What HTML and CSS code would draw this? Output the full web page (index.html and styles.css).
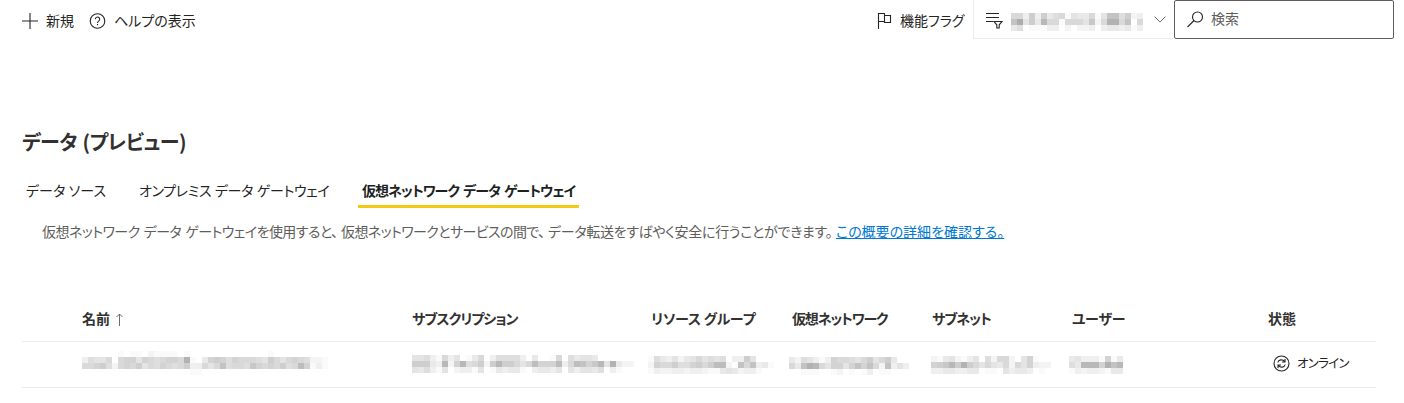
FILE: index.html
```html
<!DOCTYPE html>
<html lang="ja">
<head>
<meta charset="utf-8">
<title>データ (プレビュー)</title>
<link rel="stylesheet" href="styles.css">
</head>
<body>
<header class="commands">
  <button class="command new"><svg class="icon" width="16" height="16" viewBox="0 0 16 16"><path d="M8 0v16M0 8h16"/></svg><span class="t">新規</span></button>
  <button class="command help"><svg class="icon" width="17" height="16" viewBox="0 0 17 16"><circle cx="8.500" cy="8" r="7.300"/><path d="M6.300 6.200a2.200 2.200 0 1 1 3.600 1.700C8.900 8.600 8.500 9 8.500 10M8.500 11v1.300"/></svg><span class="t help-t">ヘルプの表示</span></button>
  <button class="command flags"><svg class="icon" width="15" height="17" viewBox="0 0 15 17"><path d="M1.500 17V1.500h6v8h-6M7.500 3.500h6v7h-6v-2"/></svg><span class="t">機能フラグ</span></button>
  <div class="filter"><svg class="icon" width="18" height="17" viewBox="0 0 18 17"><path d="M0 1.500h13M0 5.500h13M0 9.500h7M8 9.500h8l-2.800 3.300v3.200h-2.400v-3.200z"/></svg><span class="mosaic filter-m" data-rows="7739394671544715bb6923 bf594d7717775a27ee7b07 4601113302022303443413"></span><svg class="icon chevron" width="12" height="7" viewBox="0 0 12 7"><path d="M.5 .5 6 6 11.500 .5"/></svg></div>
  <label class="search"><svg class="icon" width="17" height="17" viewBox="0 0 17 17"><circle cx="10.500" cy="6" r="5"/><path d="M7 9.500.500 16"/></svg><span class="t">検索</span></label>
</header>
<main>
  <h1 class="t title">データ (プレビュー)</h1>
  <nav class="tabs">
    <a class="tab tab1"><span class="t">データ ソース</span></a>
    <a class="tab tab2"><span class="t">オンプレミス データ ゲートウェイ</span></a>
    <a class="tab tab3 active"><span class="t">仮想ネットワーク データ ゲートウェイ</span></a>
  </nav>
  <p class="intro"><span class="t s1">仮想ネットワーク データ ゲートウェイを使用すると、</span><span class="t s2">仮想ネットワークとサービスの間で、</span><span class="t s3">データ転送をすばやく安全に行うことができます。</span><a class="t link">この概要の詳細を確認する。</a></p>
  <div class="table">
    <div class="row head">
      <div class="cell"><span class="t">名前</span><svg class="icon sort" width="7" height="13" viewBox="0 0 7 13"><path d="M3.500 13V1M.500 4l3-3 3 3"/></svg></div>
      <div class="cell"><span class="t h2">サブスクリプション</span></div>
      <div class="cell"><span class="t h3">リソース グループ</span></div>
      <div class="cell"><span class="t h4">仮想ネットワーク</span></div>
      <div class="cell"><span class="t h5">サブネット</span></div>
      <div class="cell"><span class="t h6">ユーザー</span></div>
      <div class="cell"><span class="t">状態</span></div>
    </div>
    <div class="row body">
      <div class="cell"><span class="mosaic m1" data-rows="00000010110211110100000000000001000000000 36557078858767887e10489868777659757876221 77896278795768767933757b6776a8787967c8131 00000000000000000011000000000000000000000"></span></div>
      <div class="cell"><span class="mosaic m2" data-rows="5563173501470366663040017064554000000 99943d28d67929d99757c888c37cb8ad5e422 5463150233150143441034435053554603100"></span></div>
      <div class="cell"><span class="mosaic m3" data-rows="164352457565603395000 28779668979cc20b7b341 132233233211454233100"></span></div>
      <div class="cell"><span class="mosaic m4" data-rows="42653138776579579400 74bed758858b8b72b353 00111001201013011000"></span></div>
      <div class="cell"><span class="mosaic m5" data-rows="21452135062772058100 89ad9e97575472758322 33443344011053443010"></span></div>
      <div class="cell"><span class="mosaic m6" data-rows="453331814 64ddd8ebd 132332144"></span></div>
      <div class="cell status"><svg class="icon" width="17" height="17" viewBox="0 0 17 17"><circle cx="8.500" cy="8.500" r="7.500"/><path d="M4.800 7.500C5.500 4.500 9.500 4 11.500 6.300M12 4v3H9M12.200 9.500C11.500 12.500 7.500 13 5.500 10.700M5 13v-3h3"/></svg><span class="t online">オンライン</span></div>
    </div>
  </div>
</main>
<script src="mosaic.js"></script>
</body>
</html>
```

FILE: styles.css
```css
* { box-sizing: border-box; }
body { margin: 0; height: 403px; overflow: hidden; background: #fff; color: #252423; font: 14px/20px "Noto Sans CJK JP", sans-serif; font-feature-settings: "palt"; }
button { border: 0; padding: 0; background: none; font: inherit; color: inherit; font-feature-settings: inherit; }
.t { white-space: nowrap; }
.icon { display: block; flex: none; fill: none; stroke: #252423; stroke-width: 1.1; }
.mosaic { display: block; flex: none; }
.commands { display: flex; height: 39px; padding-left: 22px; }
.command { display: flex; align-items: center; gap: 8px; height: 41px; }
.command .t { padding-bottom: 2px; }
.search .t { padding-bottom: 3px; }
.new { width: 67px; }
.help { flex: 1; }
.flags { width: 96px; }
.filter { display: flex; align-items: flex-start; width: 201px; height: 39px; padding: 12px 7px 0 12px; border: solid #edebe9; border-width: 0 0 1px 1px; }
.filter-m { margin: 1px 11px 0 7px; }
.chevron { margin-top: 4px; stroke: #797775; stroke-width: 1; }
.search { display: flex; align-items: center; gap: 7px; width: 220px; height: 39px; margin-right: 10px; padding-left: 12px; border: 1px solid #605e5c; border-radius: 2px; color: #605e5c; }
main { padding: 88px 28px 0 22px; }
.title { margin: 1px 0 0; color: #323130; font-size: 20px; line-height: 28px; font-weight: 700; letter-spacing: -0.5px; word-spacing: 1.5px; }
.tabs { display: flex; gap: 25px; margin-top: 20px; }
.tab { height: 32px; padding: 4px 4px 0; }
.tab1 { width: 88px; letter-spacing: 0.1px; }
.tab2 { width: 198px; letter-spacing: -0.35px; word-spacing: 1px; }
.tab3 { width: 221px; letter-spacing: -0.95px; word-spacing: 2px; }
.active { border-bottom: 3px solid #f2c811; border-radius: 1px; font-weight: 700; color: #201f1e; }
.intro { margin: 13px 0 0 20px; color: #605e5c; display: flex; }
.s1 { width: 299px; letter-spacing: -0.55px; word-spacing: 1.5px; }
.s2 { width: 207px; letter-spacing: -0.6px; }
.s3 { width: 288px; letter-spacing: -0.3px; }
.link { color: #0078d4; text-decoration: underline; }
.table { margin-top: 56px; }
.row { display: grid; grid-template-columns: 330px 239px 141px 140px 140px 196px 1fr; height: 46px; padding-left: 60px; border-bottom: 1px solid #edebe9; }
.head { height: 45px; padding-bottom: 2px; color: #323130; font-weight: 700; }
.cell { display: flex; align-items: center; }
.body .cell { align-items: flex-start; }
.h2 { letter-spacing: -0.95px; }
.h3 { letter-spacing: -0.25px; }
.h4 { letter-spacing: -1.15px; }
.h5 { letter-spacing: -1px; }
.h6 { letter-spacing: -0.2px; }
.m1 { margin-top: 9px; }
.m2 { margin-top: 13px; }
.m3 { margin: 14px 0 0 -3px; }
.m4 { margin: 15px 0 0 -3px; }
.m5 { margin: 14px 0 0 -1px; }
.m6 { margin: 14px 0 0 -3px; }
.sort { margin: 2px 0 0 6px; stroke: #605e5c; stroke-width: 0.9; }
.status { padding: 12px 0 0 4.5px; }
.status .icon { margin-top: 1px; }
.online { font-size: 12.500px; line-height: 17px; margin-left: 7.5px; letter-spacing: -0.75px; }
```

FILE: mosaic.js
```js
// Draws redacted values as 6px gray cells; each hex digit is a cell's darkness.
document.querySelectorAll('.mosaic').forEach(el => {
  const rows = el.dataset.rows.split(' ');
  const w = rows[0].length * 6, h = rows.length * 6;
  let s = `<svg width="${w}" height="${h}" shape-rendering="crispEdges" style="display:block">`;
  rows.forEach((r, y) => [...r].forEach((c, x) => {
    const g = Math.round(255 - parseInt(c, 16) * 5.5);
    s += `<rect x="${x * 6}" y="${y * 6}" width="6" height="6" fill="rgb(${g},${g},${g})"/>`;
  }));
  el.innerHTML = s + '</svg>';
});
```
